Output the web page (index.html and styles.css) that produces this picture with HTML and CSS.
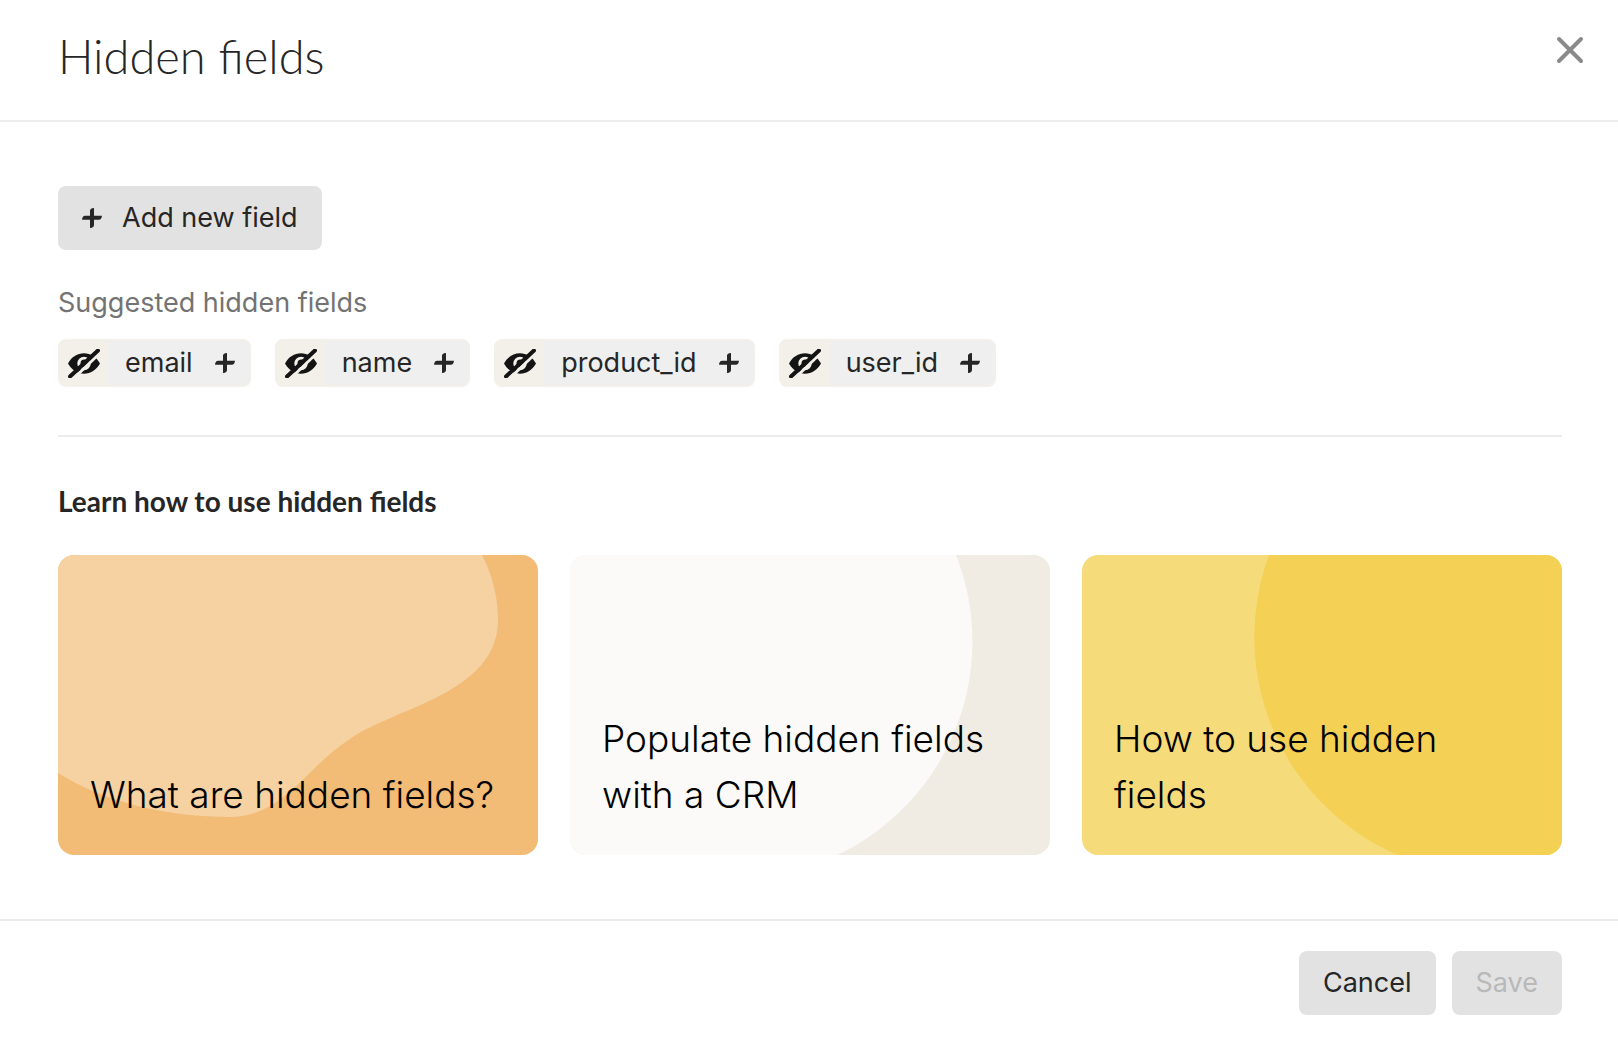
FILE: index.html
```html
<!doctype html>
<html lang="en">

<head>
<meta charset="utf-8">
<meta name="viewport" content="width=device-width, initial-scale=1">
<title>Hidden fields</title>

<link rel="stylesheet" href="styles.css">

</head>

<body>

<!-- Shared icons -->
<svg class="sprite" aria-hidden="true">
  <symbol id="icon-plus" viewBox="0 0 20 20">
    <path d="M8 2.6C8 1.2 9 .3 12 0v7.800H20c-.3 2.600-1.400 4-3 4h-5v5c0 1.900-1 3-4 3.200v-8.200H0C.3 9.300 1.300 7.800 3.200 7.800H8z"/>
  </symbol>
  <symbol id="icon-hidden" viewBox="0 0 32 29">
    <path fill-rule="evenodd" d="M0 14.500C3.500 8 9.500 4.300 16 4.300S28.500 8 32 14.500C28.500 21 22.500 24.700 16 24.700S3.500 21 0 14.500zM16 7.800a6.700 6.700 0 1 0 0 13.400 6.700 6.700 0 1 0 0-13.400z"/>
    <circle cx="16.500" cy="14.500" r="4"/>
    <path class="slash-gap" d="M5 30L34 2"/>
    <path class="slash" d="M2 27.500L30 1.500"/>
  </symbol>
</svg>

<div class="modal" role="dialog" aria-labelledby="modal-title">
  <header class="modal-header">
    <h1 id="modal-title">Hidden fields</h1>
    <button class="close" type="button" aria-label="Close">
      <svg viewBox="0 0 28 28"><path d="M3 3L25 25M25 3L3 25"/></svg>
    </button>
  </header>

  <main class="modal-body">
    <button class="button" type="button">
      <svg class="plus"><use href="#icon-plus"/></svg>
      Add new field
    </button>

    <p class="hint">Suggested hidden fields</p>
    <div class="chips">
      <button class="chip" type="button">
        <span class="chip-icon"><svg class="eye"><use href="#icon-hidden"/></svg></span>
        <span class="chip-label">email</span>
        <svg class="plus"><use href="#icon-plus"/></svg>
      </button>
      <button class="chip" type="button">
        <span class="chip-icon"><svg class="eye"><use href="#icon-hidden"/></svg></span>
        <span class="chip-label">name</span>
        <svg class="plus"><use href="#icon-plus"/></svg>
      </button>
      <button class="chip" type="button">
        <span class="chip-icon"><svg class="eye"><use href="#icon-hidden"/></svg></span>
        <span class="chip-label">product_id</span>
        <svg class="plus"><use href="#icon-plus"/></svg>
      </button>
      <button class="chip" type="button">
        <span class="chip-icon"><svg class="eye"><use href="#icon-hidden"/></svg></span>
        <span class="chip-label">user_id</span>
        <svg class="plus"><use href="#icon-plus"/></svg>
      </button>
    </div>

    <section class="learn">
      <h2>Learn how to use hidden fields</h2>
      <div class="cards">
        <a class="card orange" href="#what">
          <svg class="card-art" viewBox="0 0 480 300" preserveAspectRatio="none" aria-hidden="true">
            <path d="M0 0H424C435 21 440 43 440 65C440 122 376 144 335 162C318 169 303 176 292 184C248 212 225 262 172 262C110 262 48 248 0 218z"/>
          </svg>
          <span class="card-title">What are hidden fields?</span>
        </a>
        <a class="card sand" href="#crm">
          <svg class="card-art" viewBox="0 0 480 300" preserveAspectRatio="none" aria-hidden="true">
            <path d="M0 0H386A236 236 0 0 1 267 300H0z"/>
          </svg>
          <span class="card-title">Populate hidden fields with a CRM</span>
        </a>
        <a class="card yellow" href="#how">
          <svg class="card-art" viewBox="0 0 480 300" preserveAspectRatio="none" aria-hidden="true">
            <path d="M187 0A237 237 0 0 0 316 300H480V0z"/>
          </svg>
          <span class="card-title">How to use hidden fields</span>
        </a>
      </div>
    </section>
  </main>

  <footer class="modal-footer">
    <button class="button" type="button">Cancel</button>
    <button class="button" type="button" disabled>Save</button>
  </footer>
</div>

</body>

</html>
```

FILE: styles.css
```css
* {
  box-sizing: border-box;
}

body {
  background-color: #fff;
  color: #262627;
  font-family: Inter, "Liberation Sans", sans-serif;
  font-size: 27px;
  line-height: 40px;
  margin: 0;
}

h1,
h2,
p {
  margin: 0;
}

button {
  border: 0;
  color: inherit;
  cursor: pointer;
  font: inherit;
}

.sprite {
  display: block;
  height: 0;
  width: 0;
}

/* Header */
.modal-header {
  align-items: flex-start;
  border-bottom: 2px solid #ececec;
  display: flex;
  justify-content: space-between;
  padding: 24px 34px 32px 58px;
}

.modal-header h1 {
  font-family: Lato, sans-serif;
  font-size: 47px;
  font-weight: 300;
  line-height: 64px;
}

.close {
  background: none;
  margin-top: 12px;
  padding: 0;
}

.close svg {
  display: block;
  fill: none;
  height: 28px;
  stroke: #8a8a8a;
  stroke-linecap: round;
  stroke-width: 4;
  width: 28px;
}

/* Body */
.modal-body {
  padding: 64px 56px 64px 58px;
}

.button {
  align-items: center;
  background-color: #e2e2e2;
  border-radius: 8px;
  display: inline-flex;
  gap: 20px;
  height: 64px;
  padding: 0 24px;
}

.button:disabled {
  color: #b8b8b8;
  cursor: default;
}

.plus {
  fill: #262627;
  height: 20px;
  width: 20px;
}

.hint {
  color: #737373;
  margin: 33px 0 16px;
}

.chips {
  border-bottom: 2px solid #ececec;
  display: flex;
  flex-wrap: wrap;
  gap: 24px;
  padding-bottom: 48px;
}

.chip {
  align-items: center;
  background-color: #efefef;
  border: 2px solid #f3f0ea;
  border-radius: 8px;
  display: flex;
  height: 48px;
  overflow: hidden;
  padding: 0 14px 0 0;
}

.chip-icon {
  align-items: center;
  background-color: #f3f0ea;
  display: flex;
  height: 100%;
  padding: 0 8px;
}

.chip-label {
  padding: 0 22px 0 17px;
}

.eye {
  fill: #141414;
  height: 29px;
  width: 32px;
}

.slash {
  stroke: #141414;
  stroke-linecap: round;
  stroke-width: 4;
}

.slash-gap {
  stroke: #f3f0ea;
  stroke-width: 3;
}

/* Help cards */
.learn h2 {
  font-family: Lato, sans-serif;
  font-size: 28px;
  font-weight: 700;
  margin: 44px 0 34px;
}

.cards {
  display: grid;
  gap: 32px;
  grid-template-columns: repeat(3, 1fr);
}

.card {
  align-items: flex-end;
  border-radius: 16px;
  color: #000;
  display: flex;
  min-height: 300px;
  overflow: hidden;
  padding: 32px;
  position: relative;
  text-decoration: none;
}

.card-art {
  height: 100%;
  left: 0;
  position: absolute;
  top: 0;
  width: 100%;
}

.card-title {
  font-size: 37px;
  font-weight: 300;
  line-height: 56px;
  position: relative;
}

.card.orange {
  background-color: #f2bb76;
}
.card.orange .card-art {
  fill: #f6d1a2;
}

.card.sand {
  background-color: #f0ebe3;
}
.card.sand .card-art {
  fill: #fbfaf8;
}

.card.yellow {
  background-color: #f5db7a;
}
.card.yellow .card-art {
  fill: #f4d055;
}

/* Footer */
.modal-footer {
  border-top: 2px solid #ececec;
  display: flex;
  gap: 16px;
  justify-content: flex-end;
  padding: 30px 56px 28px;
}
```
